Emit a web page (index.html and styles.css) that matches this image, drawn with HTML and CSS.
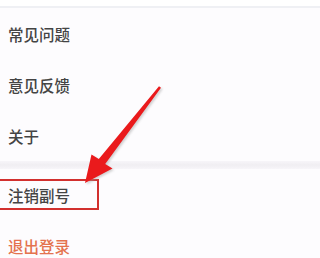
FILE: index.html
```html
<!DOCTYPE html>
<html lang="zh">
<head>
<meta charset="utf-8">
<link rel="stylesheet" href="styles.css">
</head>
<body>
<div class="page">
  <div class="topbar"></div>
  <div class="item">常见问题</div>
  <div class="item">意见反馈</div>
  <div class="item">关于</div>
  <div class="sep"></div>
  <div class="item">注销副号</div>
  <div class="item logout">退出登录</div>
  <svg class="annot" width="320" height="258" viewBox="0 0 320 258">
    <defs>
      <filter id="sh" x="-20%" y="-20%" width="140%" height="140%">
        <feGaussianBlur stdDeviation="1.2"/>
      </filter>
    </defs>
    <rect x="-3" y="180" width="101" height="29" fill="none" stroke="#d2302e" stroke-width="2"/>
    <polygon points="159,86.2 161,87.8 105.2,164 112.5,168.5 85,183 91.5,154.5 98.8,159" fill="#999" opacity="0.45" filter="url(#sh)" transform="translate(1.5,1.5)"/>
    <polygon points="159,86.2 161,87.8 105.2,164 112.5,168.5 85,183 91.5,154.5 98.8,159" fill="#ea1a1c"/>
  </svg>
</div>
</body>
</html>
```
FILE: styles.css
```css
html, body {
  margin: 0;
  padding: 0;
  background: #fdfcfe;
}
.page {
  position: relative;
  width: 320px;
  height: 258px;
  overflow: hidden;
  font-family: "Noto Sans CJK SC", "Noto Sans", sans-serif;
}
.topbar {
  height: 6px;
  background: #ffffff;
  border-bottom: 2px solid #eff0f4;
}
.item {
  height: 51px;
  display: flex;
  align-items: center;
  padding-left: 8px;
  font-size: 15.5px;
  font-weight: 500;
  color: #444444;
}
.logout {
  color: #e4734f;
}
.sep {
  height: 8px;
  background: linear-gradient(#f7f5f9, #f0eef2 50%, #f7f5f9);
}
.annot {
  position: absolute;
  left: 0;
  top: 0;
}
```
